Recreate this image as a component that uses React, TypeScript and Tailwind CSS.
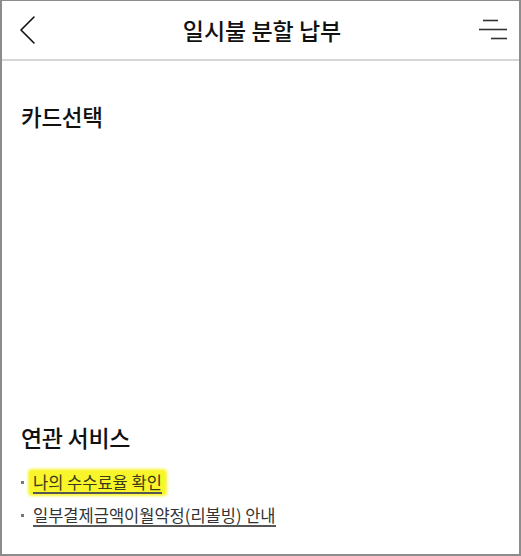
import React from 'react';

const kr = { fontFamily: '"Noto Sans CJK KR", "Noto Sans", sans-serif' };

function BackIcon() {
  return (
    <svg width="20" height="30" viewBox="0 0 20 30" fill="none" className="block">
      <path d="M15 2 L2 15 L15 28" stroke="#111" strokeWidth="1.6" strokeLinecap="round" strokeLinejoin="round" />
    </svg>
  );
}

function MenuIcon() {
  return (
    <svg width="30" height="24" viewBox="0 0 30 24" fill="none" className="block">
      <path d="M5 2.5 H20" stroke="#333" strokeWidth="1.6" />
      <path d="M1 11.5 H29" stroke="#333" strokeWidth="1.6" />
      <path d="M13 20.5 H29" stroke="#333" strokeWidth="1.6" />
    </svg>
  );
}

export default function App() {
  return (
    <div
      className="w-[521px] h-[556px] bg-white border-l-2 border-t border-r-2 border-b-2 border-[#8c8c8c] flex flex-col text-[#111]"
      style={kr}
    >
      {/* Header */}
      <header className="h-[60px] shrink-0 grid grid-cols-[1fr_auto_1fr] items-center border-b-2 border-[#d6d6d6]">
        <div className="pl-[17px] flex items-center">
          <BackIcon />
        </div>
        <h1 className="text-[23px] font-medium leading-[32px] pl-[3px]">일시불 분할 납부</h1>
        <div className="flex justify-end pr-[11px]">
          <MenuIcon />
        </div>
      </header>

      <main className="flex-1 flex flex-col px-[19px] pt-[39px] pb-[27px]">
        <h2 className="text-[22.5px] font-medium tracking-[-0.3px] leading-[32px]">카드선택</h2>

        <div className="flex-1" />

        <h2 className="text-[23px] font-medium tracking-[-0.3px] leading-[32px]">연관 서비스</h2>
        <ul className="mt-[18px] flex flex-col gap-[10px] text-[16.5px] text-[#333]">
          <li className="flex items-center">
            <span className="w-[3px] h-[3px] bg-[#777] mr-[6px]" />
            <span className="inline-block bg-[#f8f52a] shadow-[0_0_3px_2px_#f8f52a] rounded-[2px] px-[3px] pt-[1px]">
              <a className="block leading-[20px] border-b-2 border-[#555] text-[#3a3a1a]">나의 수수료율 확인</a>
            </span>
          </li>
          <li className="flex items-center">
            <span className="w-[3px] h-[3px] bg-[#777] mr-[6px]" />
            <span className="inline-block px-[3px] pt-[1px]">
              <a className="block leading-[20px] border-b-2 border-[#555]">일부결제금액이월약정(리볼빙) 안내</a>
            </span>
          </li>
        </ul>
      </main>
    </div>
  );
}
